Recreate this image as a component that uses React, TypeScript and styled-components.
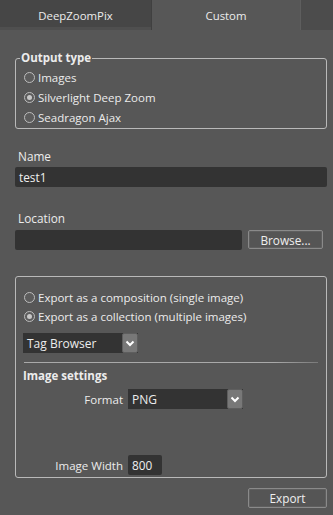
import React from "react";
import styled, { createGlobalStyle } from "styled-components";

const Global = createGlobalStyle`
  html, body {
    margin: 0;
    padding: 0;
    background: #575757;
  }
  * { box-sizing: border-box; }
`;

const Root = styled.div`
  width: 333px;
  height: 515px;
  background: #575757;
  color: #ececec;
  font-family: "Open Sans", "Noto Sans", sans-serif;
  font-size: 11.5px;
  overflow: hidden;
`;

const TabBar = styled.div`
  display: flex;
  height: 30px;
  background: #4c4c4c;
`;

const Tab = styled.div<{ active?: boolean }>`
  width: ${p => (p.active ? "149px" : "152px")};
  display: flex;
  align-items: center;
  justify-content: center;
  font-size: 11.4px;
  background: ${p => (p.active ? "#575757" : "#464646")};
  border-right: 1px solid ${p => (p.active ? "#5e5e5e" : "#404040")};
  box-shadow: ${p => (p.active ? "none" : "inset 0 -3px 0 #4f4f4f")};
`;

const Content = styled.div`
  padding: 0 6px 0 15px;
  display: flex;
  flex-direction: column;
`;

const Group = styled.fieldset`
  margin: 20px 0 0;
  padding: 1px 0 0 7px;
  border: 1px solid #b9b9b9;
  border-radius: 3px;
  height: 79px;
`;

const Legend = styled.legend`
  font-weight: bold;
  font-size: 11.5px;
  line-height: 16px;
  padding: 0 1px;
  margin-left: -3px;
`;

const RadioRow = styled.label<{ h?: number }>`
  display: flex;
  align-items: center;
  height: ${p => p.h ?? 20}px;
  gap: 3px;
`;

const RadioDot = styled.span<{ checked?: boolean }>`
  width: 11px;
  height: 11px;
  border-radius: 50%;
  border: 1px solid #bdbdbd;
  background: #5c5c5c;
  display: flex;
  align-items: center;
  justify-content: center;
  margin-left: 1px;
  &::after {
    content: "";
    width: 5px;
    height: 5px;
    border-radius: 50%;
    background: ${p => (p.checked ? "#c8c8c8" : "transparent")};
  }
`;

const FieldLabel = styled.div<{ top: number }>`
  margin-top: ${p => p.top}px;
  margin-left: 3px;
  line-height: 16px;
  font-size: 11.8px;
`;

const TextBox = styled.div<{ w?: number }>`
  height: 20px;
  width: ${p => (p.w ? `${p.w}px` : "auto")};
  background: #333333;
  border-radius: 2px;
  padding-left: 4px;
  display: flex;
  align-items: center;
  color: #f0f0f0;
  font-size: 11.8px;
`;

const LocationRow = styled.div`
  display: flex;
  gap: 6px;
  margin-top: 4px;
  padding-right: 4px;
  align-items: flex-start;
`;

const Button = styled.div<{ w: number }>`
  width: ${p => p.w}px;
  height: 19px;
  border: 1px solid #8a8a8a;
  border-radius: 2px;
  background: #555555;
  box-shadow: inset 0 0 0 1px #5f5f5f;
  display: flex;
  align-items: center;
  justify-content: center;
  color: #efefef;
  font-size: 11.8px;
`;

const ExportBox = styled.div`
  margin-top: 26px;
  height: 202px;
  border: 1px solid #b9b9b9;
  border-radius: 3px;
  padding: 11px 8px 0 7px;
  display: flex;
  flex-direction: column;
`;

const Select = styled.div<{ w: number; top?: number }>`
  width: ${p => p.w}px;
  height: 20px;
  margin-top: ${p => p.top ?? 0}px;
  background: #333333;
  display: flex;
  align-items: center;
  justify-content: space-between;
  padding-left: 4px;
  font-size: 12px;
`;

const Arrow = styled.span`
  width: 16px;
  height: 20px;
  background: #787878;
  border: 1px solid #5e5e5e;
  border-radius: 2px;
  display: flex;
  align-items: center;
  justify-content: center;
`;

const Divider = styled.div`
  height: 1px;
  background: linear-gradient(to right, #a9a9a9 85%, #7a7a7a);
  margin: 9px 0 0 1px;
`;

const SectionTitle = styled.div`
  font-weight: bold;
  font-size: 11.5px;
  line-height: 16px;
  margin-top: 5px;
`;

const SettingRow = styled.div<{ top: number }>`
  display: grid;
  grid-template-columns: 100px auto;
  column-gap: 5px;
  align-items: center;
  margin-top: ${p => p.top}px;
`;

const SettingLabel = styled.span`
  text-align: right;
`;

const Footer = styled.div`
  display: flex;
  justify-content: flex-end;
  margin-top: 10px;
`;

const Chevron = () => (
  <svg width="10" height="7" viewBox="0 0 10 7">
    <path d="M1.5 1.5 L5 5 L8.5 1.5" stroke="#ffffff" strokeWidth="2" fill="none" />
  </svg>
);

const Radio = ({ label, checked, h }: { label: string; checked?: boolean; h?: number }) => (
  <RadioRow h={h}>
    <RadioDot checked={checked} />
    <span>{label}</span>
  </RadioRow>
);

export default function App() {
  return (
    <Root>
      <Global />
      <TabBar>
        <Tab>DeepZoomPix</Tab>
        <Tab active>Custom</Tab>
      </TabBar>
      <Content>
        <Group>
          <Legend>Output type</Legend>
          <Radio label="Images" />
          <Radio label="Silverlight Deep Zoom" checked />
          <Radio label="Seadragon Ajax" />
        </Group>

        <FieldLabel top={19}>Name</FieldLabel>
        <TextBox style={{ marginTop: 3 }}>test1</TextBox>

        <FieldLabel top={23}>Location</FieldLabel>
        <LocationRow>
          <TextBox w={227} />
          <Button w={75}>Browse...</Button>
        </LocationRow>

        <ExportBox>
          <Radio label="Export as a composition (single image)" h={19} />
          <Radio label="Export as a collection (multiple images)" h={19} checked />
          <Select w={115} top={7}>
            Tag Browser
            <Arrow><Chevron /></Arrow>
          </Select>
          <Divider />
          <SectionTitle>Image settings</SectionTitle>
          <SettingRow top={5}>
            <SettingLabel>Format</SettingLabel>
            <Select w={115}>
              PNG
              <Arrow><Chevron /></Arrow>
            </Select>
          </SettingRow>
          <SettingRow top={46}>
            <SettingLabel>Image Width</SettingLabel>
            <TextBox w={34}>800</TextBox>
          </SettingRow>
        </ExportBox>

        <Footer>
          <Button w={79} style={{ height: 20 }}>Export</Button>
        </Footer>
      </Content>
    </Root>
  );
}
